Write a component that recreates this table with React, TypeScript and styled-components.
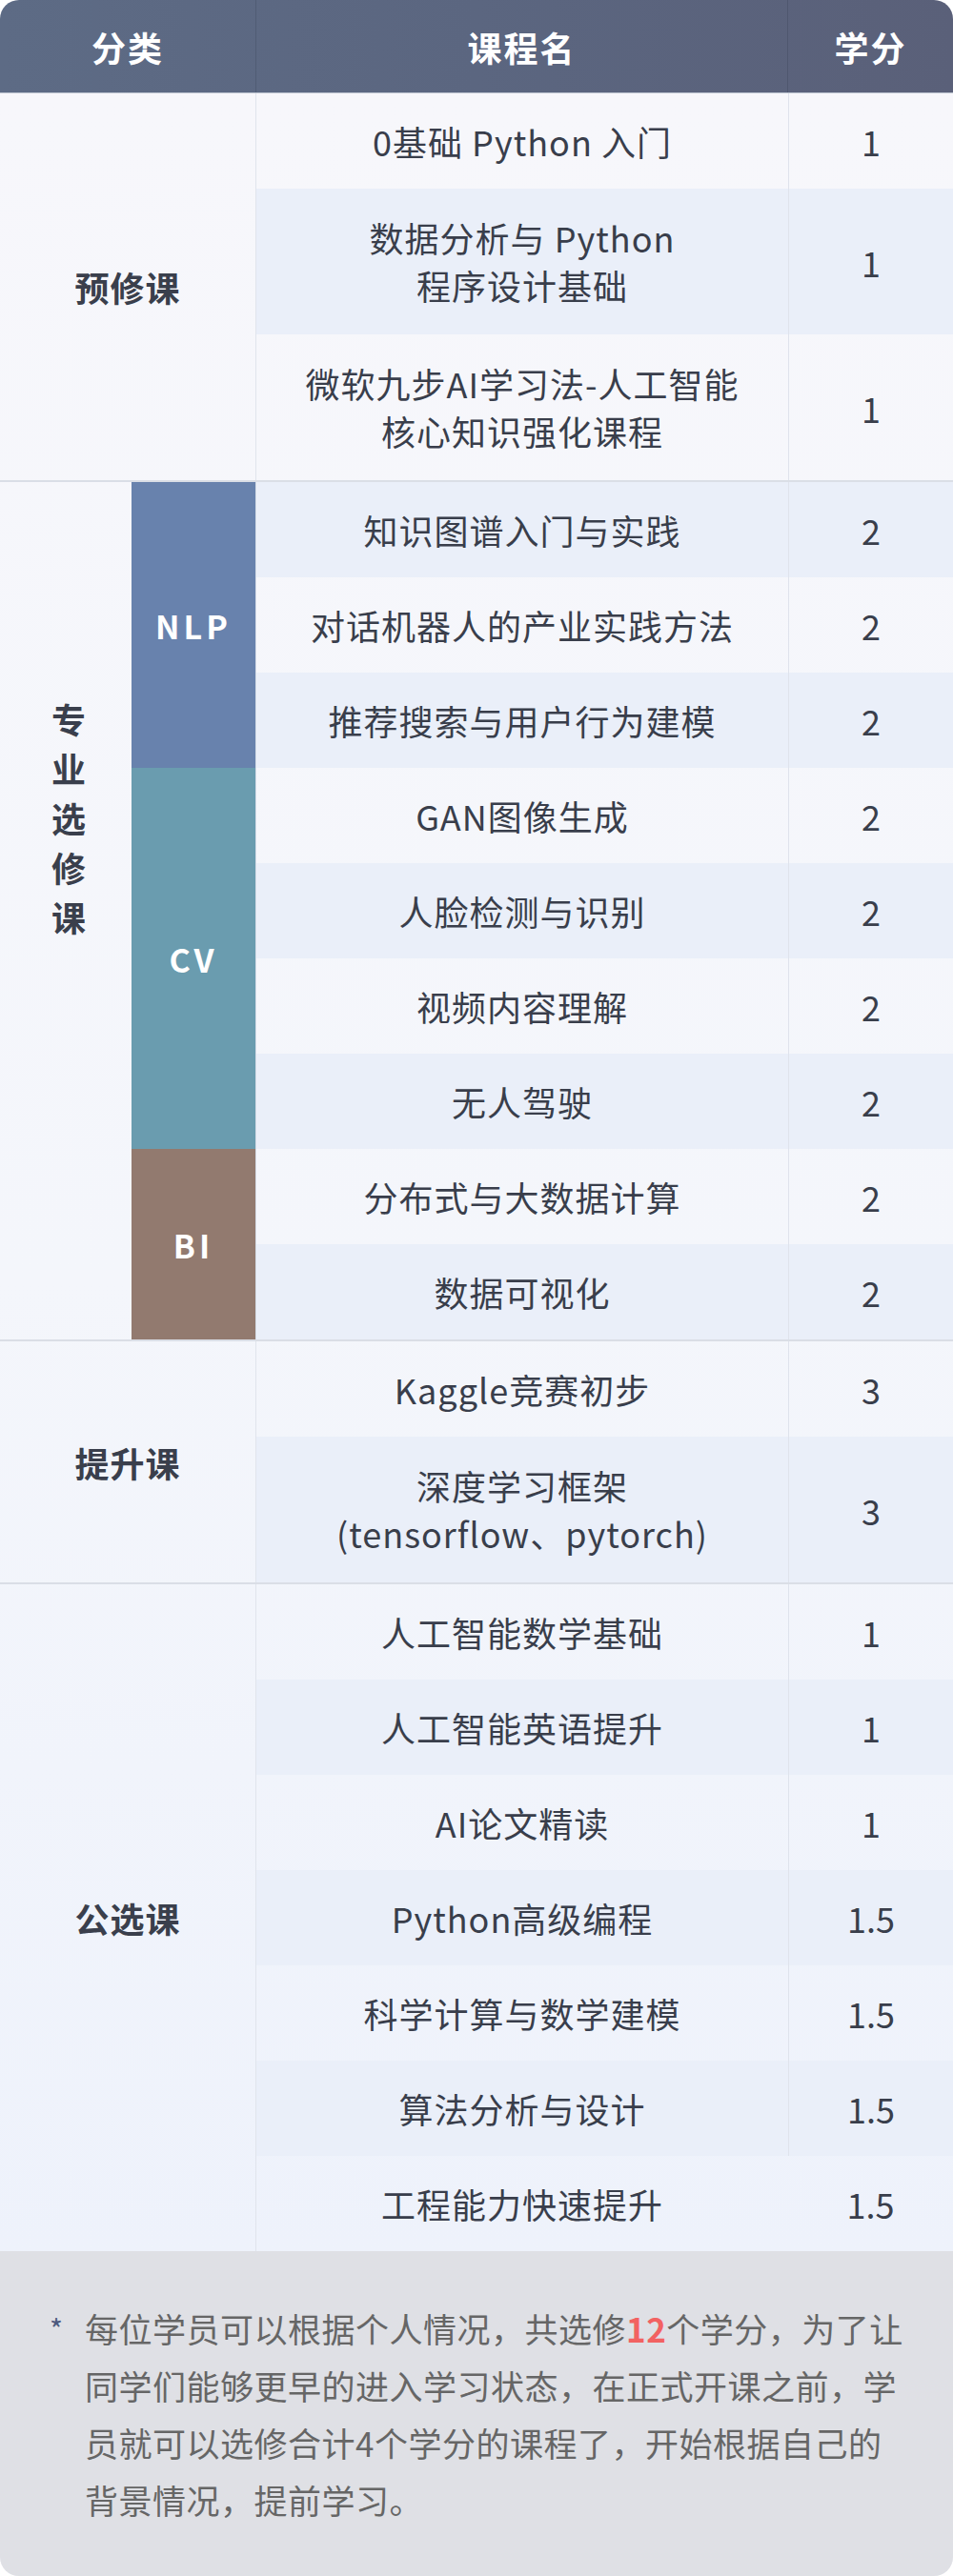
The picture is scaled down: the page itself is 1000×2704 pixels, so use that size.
import React from 'react';
import styled, { createGlobalStyle } from 'styled-components';

const Global = createGlobalStyle`
  html, body { margin: 0; padding: 0; background: #ffffff; }
  body { font-family: "Noto Sans CJK SC", "Noto Sans", sans-serif; }
`;

const Card = styled.div`
  width: 1000px;
  border-radius: 20px;
  overflow: hidden;
  background: #f5f6fb;
`;

const Header = styled.div`
  display: grid;
  grid-template-columns: 269px 558px 173px;
  height: 97px;
  background: linear-gradient(90deg, #5d6b85 0%, #5b6680 50%, #5a6079 100%);
  border-bottom: 1px solid #bcc3cf;
`;

const HeadCell = styled.div<{ $divider?: boolean }>`
  display: flex;
  align-items: center;
  justify-content: center;
  color: #ffffff;
  font-size: 36px;
  font-weight: 700;
  letter-spacing: 2px;
  ${(p) => p.$divider && 'border-right: 1px solid rgba(40, 48, 70, 0.22);'}
`;

const Body = styled.div`
  background: linear-gradient(180deg, #f7f7fb 0%, #f4f6fb 55%, #eef2fb 100%);
`;

const Section = styled.div<{ $last?: boolean; $split?: boolean }>`
  display: grid;
  grid-template-columns: ${(p) => (p.$split ? '138px 1fr' : '269px 1fr')};
  ${(p) => !p.$last && 'border-bottom: 2px solid #dadee6;'}
`;

const Category = styled.div`
  display: flex;
  align-items: center;
  justify-content: center;
  font-size: 36px;
  font-weight: 700;
  color: #3a3f4c;
  letter-spacing: 1px;
  border-right: 1px solid #e0e4ec;
`;

const VerticalCategory = styled.div`
  display: flex;
  align-items: center;
  justify-content: center;
  padding: 0 0 196px 6px;
`;

const VerticalText = styled.div`
  width: 1em;
  font-size: 36px;
  font-weight: 700;
  line-height: 52px;
  color: #3a3f4c;
  word-break: break-all;
  text-align: center;
`;

const Groups = styled.div`
  display: flex;
  flex-direction: column;
`;

const Group = styled.div`
  display: grid;
  grid-template-columns: 131px 1fr;
`;

const GroupLabel = styled.div<{ $color: string }>`
  display: flex;
  align-items: center;
  justify-content: center;
  background: ${(p) => p.$color};
  color: #ffffff;
  font-size: 34px;
  font-weight: 700;
  letter-spacing: 4px;
  border-right: 1px solid #d6dde8;
`;

const Rows = styled.div`
  display: flex;
  flex-direction: column;
`;

const Row = styled.div<{ $shade: boolean }>`
  display: grid;
  grid-template-columns: 1fr 173px;
  background: ${(p) => (p.$shade ? '#eaeff9' : 'transparent')};
`;

const CourseCell = styled.div<{ $lines: number }>`
  display: flex;
  flex-direction: column;
  align-items: center;
  justify-content: center;
  text-align: center;
  padding: ${(p) => (p.$lines > 1 ? '26px 12px 27px' : '25px 12px')};
  font-size: 36px;
  line-height: 50px;
  color: #393e4b;
  letter-spacing: 1px;
`;

const Line = styled.span`
  display: block;
  white-space: nowrap;
`;

const Credit = styled.div<{ $divider: boolean }>`
  display: flex;
  align-items: center;
  justify-content: center;
  font-size: 36px;
  color: #393e4b;
  ${(p) => p.$divider && 'border-left: 1px solid #dfe3ec;'}
`;

const Footer = styled.div`
  display: flex;
  align-items: flex-start;
  background: #dfe0e5;
  padding: 51px 40px 50px 52px;
`;

const Star = styled.span`
  flex: none;
  width: 37px;
  font-size: 30px;
  line-height: 60px;
  color: #4d5a7e;
`;

const Note = styled.p`
  margin: 0;
  width: 860px;
  font-size: 35px;
  line-height: 60px;
  color: #666666;
  letter-spacing: 0.5px;
`;

const Highlight = styled.span`
  color: #f26262;
  font-weight: 700;
`;

type CourseData = { name: string; credit: string };
type GroupData = { label: string; color: string; rows: CourseData[] };

const c = (name: string, credit: string): CourseData => ({ name, credit });

const pre: CourseData[] = [
  c('0基础 Python 入门', '1'),
  c('数据分析与 Python\n程序设计基础', '1'),
  c('微软九步AI学习法-人工智能\n核心知识强化课程', '1'),
];

const groups: GroupData[] = [
  {
    label: 'NLP',
    color: '#6882ad',
    rows: [c('知识图谱入门与实践', '2'), c('对话机器人的产业实践方法', '2'), c('推荐搜索与用户行为建模', '2')],
  },
  {
    label: 'CV',
    color: '#6a9caf',
    rows: [c('GAN图像生成', '2'), c('人脸检测与识别', '2'), c('视频内容理解', '2'), c('无人驾驶', '2')],
  },
  {
    label: 'BI',
    color: '#927a6f',
    rows: [c('分布式与大数据计算', '2'), c('数据可视化', '2')],
  },
];

const advanced: CourseData[] = [c('Kaggle竞赛初步', '3'), c('深度学习框架\n(tensorflow、pytorch)', '3')];

const publicCourses: CourseData[] = [
  c('人工智能数学基础', '1'),
  c('人工智能英语提升', '1'),
  c('AI论文精读', '1'),
  c('Python高级编程', '1.5'),
  c('科学计算与数学建模', '1.5'),
  c('算法分析与设计', '1.5'),
  c('工程能力快速提升', '1.5'),
];

function RowList({ rows, start, lastNoDivider }: { rows: CourseData[]; start: number; lastNoDivider?: boolean }) {
  return (
    <Rows>
      {rows.map((r, i) => {
        const lines = r.name.split('\n');
        const idx = start + i;
        const isLast = i === rows.length - 1;
        return (
          <Row key={r.name} $shade={idx % 2 === 1}>
            <CourseCell $lines={lines.length}>
              {lines.map((l) => (
                <Line key={l}>{l}</Line>
              ))}
            </CourseCell>
            <Credit $divider={!(lastNoDivider && isLast)}>{r.credit}</Credit>
          </Row>
        );
      })}
    </Rows>
  );
}

export default function App() {
  let counter = pre.length;
  const groupStarts = groups.map((g) => {
    const s = counter;
    counter += g.rows.length;
    return s;
  });
  const advStart = counter;
  counter += advanced.length;
  const pubStart = counter;

  return (
    <>
      <Global />
      <Card>
        <Header>
          <HeadCell $divider>分类</HeadCell>
          <HeadCell $divider>课程名</HeadCell>
          <HeadCell>学分</HeadCell>
        </Header>
        <Body>
          <Section>
            <Category>预修课</Category>
            <RowList rows={pre} start={0} />
          </Section>
          <Section $split>
            <VerticalCategory>
              <VerticalText>专业选修课</VerticalText>
            </VerticalCategory>
            <Groups>
              {groups.map((g, gi) => (
                <Group key={g.label}>
                  <GroupLabel $color={g.color}>{g.label}</GroupLabel>
                  <RowList rows={g.rows} start={groupStarts[gi]} />
                </Group>
              ))}
            </Groups>
          </Section>
          <Section>
            <Category>提升课</Category>
            <RowList rows={advanced} start={advStart} />
          </Section>
          <Section $last>
            <Category>公选课</Category>
            <RowList rows={publicCourses} start={pubStart} lastNoDivider />
          </Section>
        </Body>
        <Footer>
          <Star>*</Star>
          <Note>
            每位学员可以根据个人情况，共选修<Highlight>12</Highlight>个学分，为了让同学们能够更早的进入学习状态，在正式开课之前，学员就可以选修合计4个学分的课程了，开始根据自己的背景情况，提前学习。
          </Note>
        </Footer>
      </Card>
    </>
  );
}
